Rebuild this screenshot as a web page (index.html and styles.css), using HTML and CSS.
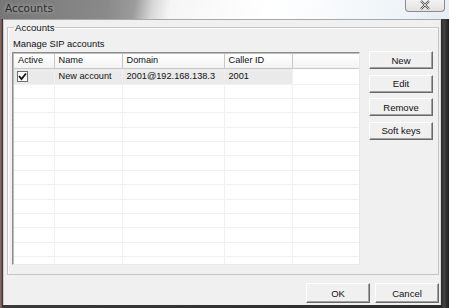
FILE: index.html
```html
<!DOCTYPE html>
<html lang="en">
<head>
  <meta charset="UTF-8">
  <title>Accounts</title>
  <link rel="stylesheet" href="styles.css">
</head>
<body>
  <div class="window">
    <div class="titlebar">
      <span class="title">Accounts</span>
      <div class="close">
        <svg width="12" height="10" viewBox="0 0 12 10"><path d="M2 1 L10 9 M10 1 L2 9" stroke="#555" stroke-width="2.2" fill="none"/><path d="M2 1 L10 9 M10 1 L2 9" stroke="#f4f4f4" stroke-width="0.8" fill="none"/></svg>
      </div>
    </div>
    <div class="frame">
      <div class="client">
        <fieldset class="group">
          <legend>Accounts</legend>
          <p class="caption">Manage SIP accounts</p>
          <div class="group_body">
            <div class="list">
              <table>
                <colgroup>
                  <col class="c_active"><col class="c_name"><col class="c_domain"><col class="c_caller"><col class="c_blank">
                </colgroup>
                <thead>
                  <tr><th>Active</th><th>Name</th><th>Domain</th><th>Caller ID</th><th></th></tr>
                </thead>
                <tbody>
                  <tr class="selected"><td><span class="check">
                    <svg width="9" height="9" viewBox="0 0 9 9"><path d="M1 4 L3.5 7 L8 1.5" stroke="#111" stroke-width="1.8" fill="none"/></svg>
                  </span></td><td>New account</td><td>2001@192.168.138.3</td><td>2001</td><td></td></tr>
                  <tr><td></td><td></td><td></td><td></td><td></td></tr>
                  <tr><td></td><td></td><td></td><td></td><td></td></tr>
                  <tr><td></td><td></td><td></td><td></td><td></td></tr>
                  <tr><td></td><td></td><td></td><td></td><td></td></tr>
                  <tr><td></td><td></td><td></td><td></td><td></td></tr>
                  <tr><td></td><td></td><td></td><td></td><td></td></tr>
                  <tr><td></td><td></td><td></td><td></td><td></td></tr>
                  <tr><td></td><td></td><td></td><td></td><td></td></tr>
                  <tr><td></td><td></td><td></td><td></td><td></td></tr>
                  <tr><td></td><td></td><td></td><td></td><td></td></tr>
                  <tr><td></td><td></td><td></td><td></td><td></td></tr>
                  <tr><td></td><td></td><td></td><td></td><td></td></tr>
                  <tr><td></td><td></td><td></td><td></td><td></td></tr>
                </tbody>
              </table>
            </div>
            <div class="side_buttons">
              <button class="btn">New</button>
              <button class="btn">Edit</button>
              <button class="btn">Remove</button>
              <button class="btn">Soft keys</button>
            </div>
          </div>
        </fieldset>
        <div class="footer">
          <button class="btn">OK</button>
          <button class="btn">Cancel</button>
        </div>
      </div>
    </div>
  </div>
</body>
</html>
```

FILE: styles.css
```css
* {
  box-sizing: border-box;
}

body {
  margin: 0;
  width: 449px;
  height: 308px;
  overflow: hidden;
  background-color: #2b2b2b;
  font-family: "Liberation Sans", Arial, sans-serif;
  font-size: 9.2px;
  color: #111;
}

.window {
  display: flex;
  flex-direction: column;
  height: 308px;
}

.titlebar {
  position: relative;
  height: 19px;
  background: linear-gradient(100deg, #767676 0%, #8a8a8a 24%, #9c9c9c 30%, #d8d8d8 34%, #f6f6f6 38%, #ffffff 60%, #f4f8fb 80%, #e6eef4 100%);
}

.title {
  display: block;
  padding: 2px 0 0 5px;
  font-family: "DejaVu Sans", sans-serif;
  font-size: 10.5px;
  color: #2a2a2a;
  text-shadow: 0 0 4px rgba(255, 255, 255, 0.6);
}

.close {
  position: absolute;
  top: -3px;
  left: 405px;
  width: 40px;
  height: 15px;
  border: 1px solid #8c8c8c;
  border-top: none;
  border-radius: 0 0 4px 4px;
  background: linear-gradient(180deg, #f6f6f6, #e2e2e2);
  display: flex;
  justify-content: center;
  align-items: center;
  padding-top: 2px;
}

.frame {
  flex: 1;
  display: flex;
  padding: 0 8px 3px 3px;
  background: linear-gradient(90deg, #6a5a5c 0, #a86c70 1px, #3a3a3a 2px, #2a2a2a 441px, #444 444px, #1e1e1e 449px);
}

.client {
  flex: 1;
  display: flex;
  flex-direction: column;
  background-color: #f0f0f0;
  border-left: 1px solid #cfcfcf;
  border-top: 1px solid #a8a8a8;
  border-right: 1px solid #d8d8d8;
  padding: 2px 0 0 3px;
}

.group {
  margin: 0;
  width: 432px;
  height: 253px;
  border: 1px solid #c4c4c4;
  box-shadow: inset 1px 1px 0 #fff;
  padding: 0 0 0 4px;
}

.group legend {
  padding: 0 1px;
  margin-left: 2px;
  font-size: 9.6px;
  line-height: 11px;
}

.caption {
  margin: 5px 0 0 1px;
  font-size: 9.4px;
  line-height: 12px;
}

.group_body {
  display: flex;
  margin-top: 2px;
}

.list {
  width: 348px;
  height: 213px;
  overflow: hidden;
  background-color: #fff;
  border: 1px solid #8c8c8c;
  border-right-color: #e8e8e8;
  border-bottom-color: #e8e8e8;
  box-shadow: inset 1px 1px 0 #bdbdbd;
  padding: 1px 0 0 1px;
}

table {
  border-collapse: collapse;
  table-layout: fixed;
  width: 346px;
}

.c_active { width: 40px; }
.c_name { width: 68px; }
.c_domain { width: 102px; }
.c_caller { width: 68px; }
.c_blank { width: 68px; }

th {
  height: 14px;
  padding: 0 0 0 4px;
  font-weight: normal;
  text-align: left;
  background: linear-gradient(180deg, #ffffff, #f3f3f3);
  border-right: 1px solid #c8c8c8;
  border-bottom: 1px solid #c8c8c8;
  line-height: 13px;
}

td {
  height: 14.4px;
  padding: 0 0 0 4px;
  border-right: 1px solid #f0f0f0;
  border-bottom: 1px solid #f0f0f0;
  line-height: 13px;
  white-space: nowrap;
  overflow: hidden;
}

tbody tr:first-child td {
  height: 16px;
}

.selected td {
  background-color: #eaeaea;
}

.selected td:last-child {
  background-color: #fff;
}

.check {
  display: flex;
  justify-content: center;
  align-items: center;
  width: 11px;
  height: 11px;
  margin-left: -1px;
  border: 1px solid #6e6e6e;
  background-color: #fff;
}

.side_buttons {
  display: flex;
  flex-direction: column;
  gap: 5.5px;
  margin: -1px 0 0 9px;
}

.btn {
  width: 64px;
  height: 18px;
  padding: 0;
  font-family: "Liberation Sans", Arial, sans-serif;
  font-size: 9.5px;
  color: #111;
  background: #f0f0f0;
  border: 1px solid;
  border-color: #fff #6a6a6a #6a6a6a #fff;
  border-radius: 0;
  box-shadow: inset -1px -1px 0 #a0a0a0;
}

.footer {
  display: flex;
  justify-content: flex-end;
  gap: 5px;
  margin-top: 8px;
  padding-right: 1px;
}

.footer .btn {
  height: 20px;
}
```
